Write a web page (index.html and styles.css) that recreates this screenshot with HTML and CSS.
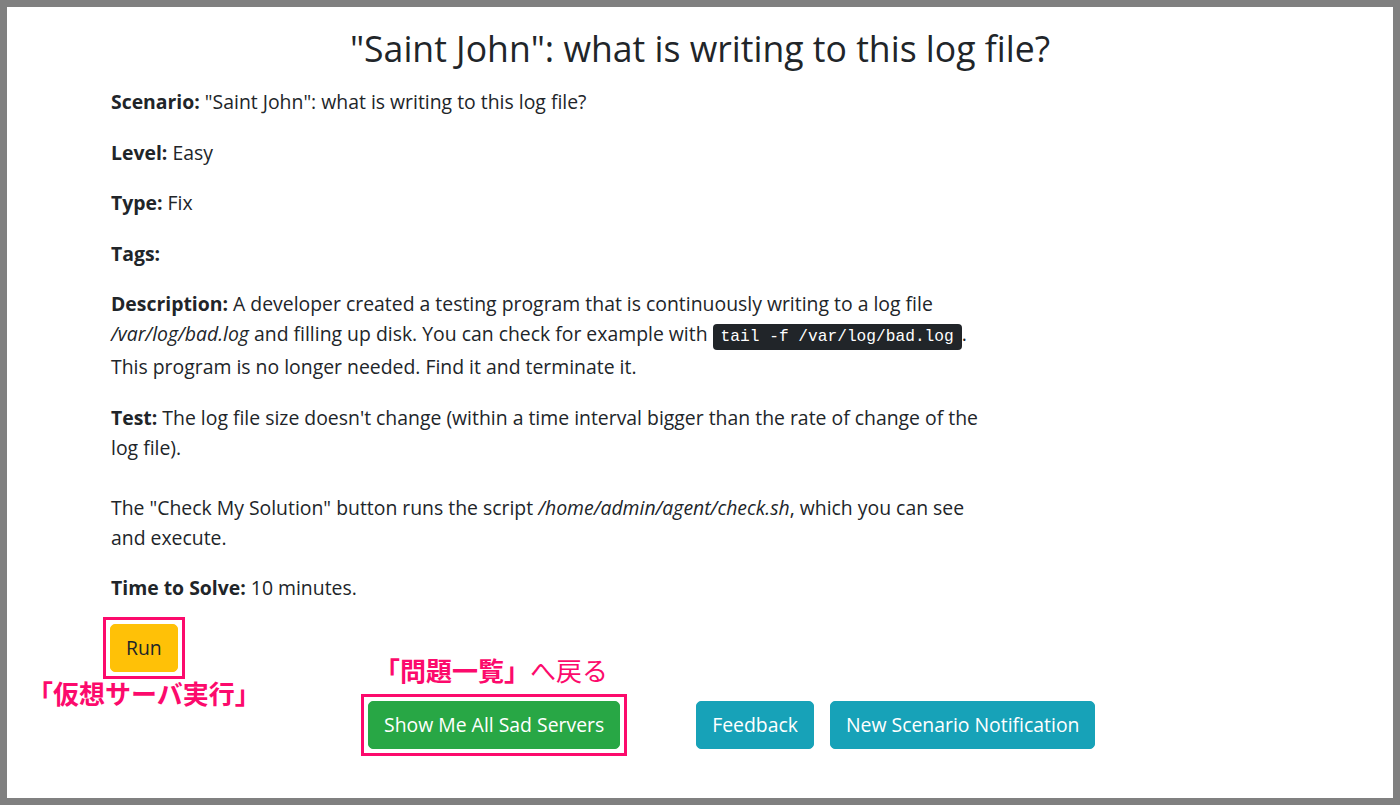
FILE: index.html
```html
<!DOCTYPE html>
<html lang="en">
<head>
    <meta charset="UTF-8">
    <meta name="viewport" content="width=device-width, initial-scale=1.0">
    <title>Saint John - Sad Servers</title>
    <link rel="stylesheet" href="styles.css">
</head>
<body>

    <div class="frame">
        <h1 class="title">"Saint John": what is writing to this log file?</h1>

        <div class="content">
            <p><b>Scenario:</b> "Saint John": what is writing to this log file?</p>
            <p><b>Level:</b> Easy</p>
            <p><b>Type:</b> Fix</p>
            <p><b>Tags:</b> </p>
            <p><b>Description:</b> A developer created a testing program that is continuously writing to a log file <i>/var/log/bad.log</i> and filling up disk. You can check for example with <code>tail -f /var/log/bad.log</code>. This program is no longer needed. Find it and terminate it.</p>
            <p><b>Test:</b> The log file size doesn't change (within a time interval bigger than the rate of change of the log file).<br><br>The "Check My Solution" button runs the script <i>/home/admin/agent/check.sh</i>, which you can see and execute.</p>
            <p><b>Time to Solve:</b> 10 minutes.</p>

            <div class="run-wrap">
                <button class="btn btn-warning marked">Run</button>
                <span class="note note-run">「仮想サーバ実行」</span>
            </div>
        </div>

        <div class="actions">
            <div class="show-wrap">
                <span class="note note-list"><b>「問題一覧」</b>へ戻る</span>
                <button class="btn btn-success marked">Show Me All Sad Servers</button>
            </div>
            <button class="btn btn-info feedback">Feedback</button>
            <button class="btn btn-info">New Scenario Notification</button>
        </div>
    </div>

</body>
</html>
```

FILE: styles.css
```css
body {
    margin: 0;
    padding: 0;
    font-family: 'Open Sans', 'Noto Sans', sans-serif;
    font-size: 19.4px;
    line-height: 30px;
    color: #212529;
    background: #fff;
}

.frame {
    box-sizing: border-box;
    width: 1400px;
    height: 805px;
    border: 7px solid #808080;
    overflow: hidden;
}

.title {
    margin: 20px 0 17px;
    font-size: 35.6px;
    font-weight: 500;
    line-height: 43px;
    text-align: center;
}

.content {
    padding-left: 104px;
    width: 876px;
}

p {
    margin: 0 0 20.5px;
}

b {
    font-weight: 700;
}

code {
    font-family: 'Liberation Mono', monospace;
    font-size: 16.2px;
    background: #212529;
    color: #fff;
    padding: 4px 8px;
    border-radius: 4px;
}

.btn {
    display: block;
    font-family: inherit;
    font-size: 19.4px;
    line-height: 30px;
    padding: 8px 15px;
    border: 1px solid transparent;
    border-radius: 5px;
    color: #fff;
    cursor: pointer;
}

.btn-warning {
    background: #ffc107;
    border-color: #ffc107;
    color: #212529;
}

.btn-success {
    background: #28a745;
    border-color: #28a745;
}

.btn-info {
    background: #17a2b8;
    border-color: #17a2b8;
}

/* pink boxes drawn over the screenshot */
.marked {
    position: relative;
}

.marked::after {
    content: "";
    position: absolute;
    top: -8px;
    right: -8px;
    bottom: -8px;
    left: -8px;
    border: 3px solid #fc0a6c;
}

.run-wrap {
    position: relative;
    width: fit-content;
    margin-left: -1px;
}

.note {
    position: absolute;
    white-space: nowrap;
    font-family: 'Noto Sans CJK JP', sans-serif;
    font-size: 26px;
    line-height: 1;
    color: #fc0a6c;
}

.note b {
    font-weight: 700;
}

.note-run {
    left: -83px;
    top: 56px;
    font-weight: 700;
}

.note-list {
    left: 6px;
    top: -44px;
}

.actions {
    display: flex;
    align-items: flex-start;
    margin-top: 29px;
    padding-left: 361px;
}

.show-wrap {
    position: relative;
}

.feedback {
    margin-left: 76px;
    margin-right: 16px;
}
```
